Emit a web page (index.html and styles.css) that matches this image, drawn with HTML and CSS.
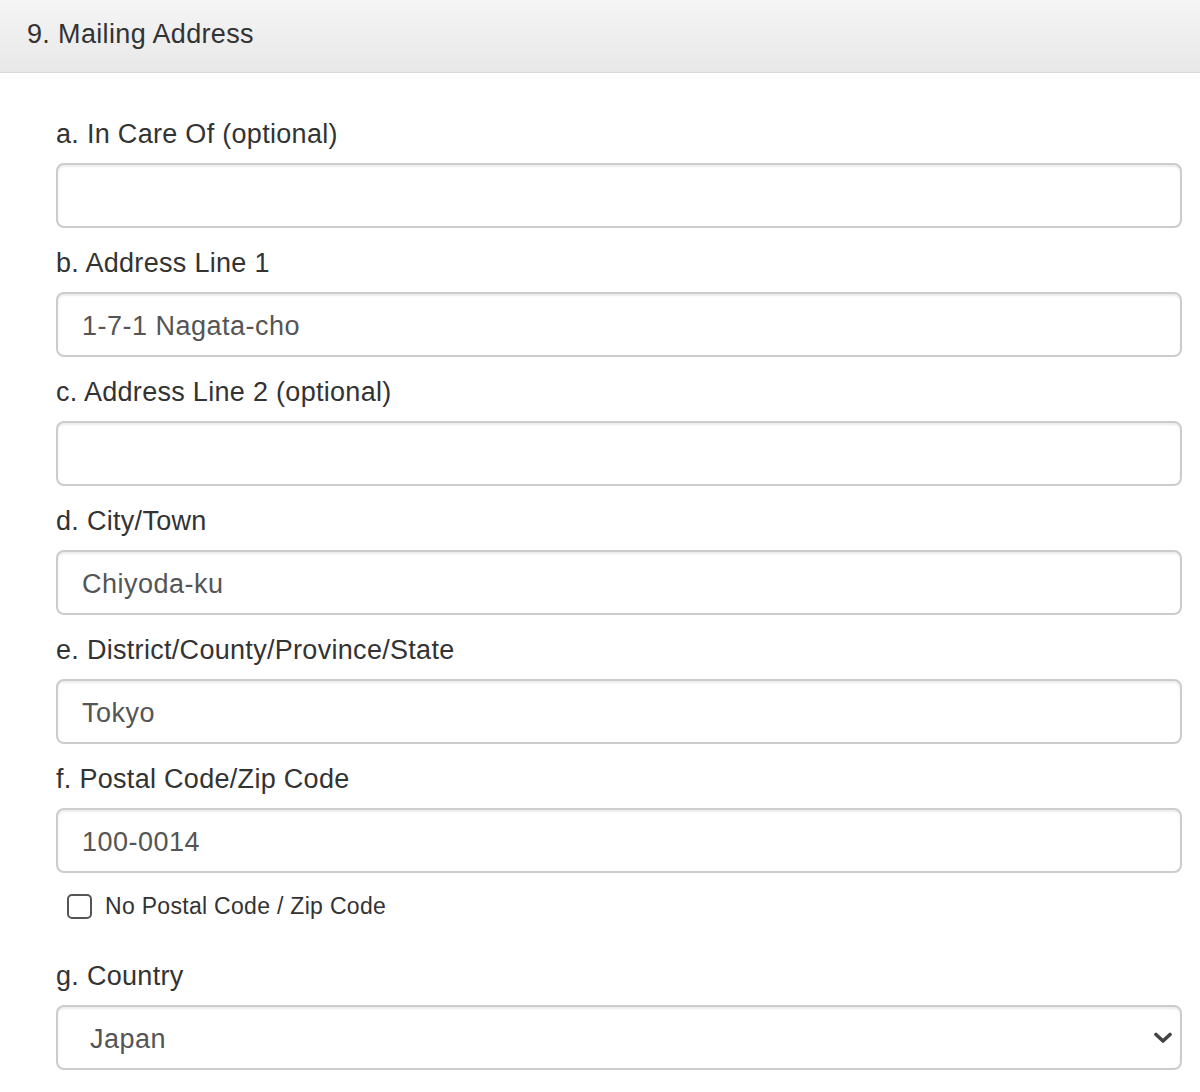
FILE: index.html
```html
<!DOCTYPE html>
<html>
<head>
<meta charset="utf-8">
<link rel="stylesheet" href="styles.css">
</head>
<body>
<div class="panel">
  <div class="panel-heading">9. Mailing Address</div>
  <div class="panel-body">
    <div class="field">
      <label class="field-label">a. In Care Of (optional)</label>
      <input class="form-control" type="text" value="">
    </div>
    <div class="field">
      <label class="field-label">b. Address Line 1</label>
      <input class="form-control" type="text" value="1-7-1 Nagata-cho">
    </div>
    <div class="field">
      <label class="field-label">c. Address Line 2 (optional)</label>
      <input class="form-control" type="text" value="">
    </div>
    <div class="field">
      <label class="field-label">d. City/Town</label>
      <input class="form-control" type="text" value="Chiyoda-ku">
    </div>
    <div class="field">
      <label class="field-label">e. District/County/Province/State</label>
      <input class="form-control" type="text" value="Tokyo">
    </div>
    <div class="field">
      <label class="field-label">f. Postal Code/Zip Code</label>
      <input class="form-control" type="text" value="100-0014">
    </div>
    <div class="check-row">
      <span class="checkbox"></span>
      <span class="check-label">No Postal Code / Zip Code</span>
    </div>
    <div class="field field-country">
      <label class="field-label">g. Country</label>
      <div class="select">
        <span class="select-value">Japan</span>
        <svg class="chevron" width="18" height="12" viewBox="0 0 18 12"><path d="M2 2.5 L9 9 L16 2.5" fill="none" stroke="#444" stroke-width="3.6" stroke-linecap="round" stroke-linejoin="round"/></svg>
      </div>
    </div>
  </div>
</div>
</body>
</html>
```

FILE: styles.css
```css
html, body {
  margin: 0;
  padding: 0;
  background: #fff;
}
body {
  font-family: "Liberation Sans", Arial, Helvetica, sans-serif;
  color: #333;
}
.panel-heading {
  height: 72px;
  box-sizing: content-box;
  padding-left: 27px;
  font-size: 27px;
  letter-spacing: 0.35px;
  line-height: 68px;
  color: #333;
  background: linear-gradient(to bottom, #f5f5f5 0%, #e8e8e8 100%);
  border-bottom: 1px solid #d8d8d8;
}
.panel-body {
  padding: 26px 18px 0 56px;
}
.field {
  display: flex;
  flex-direction: column;
}
.field-label {
  display: block;
  margin-top: 16px;
  margin-bottom: 10px;
  height: 38px;
  line-height: 38px;
  font-size: 27px;
  letter-spacing: 0.3px;
  color: #333;
}
.form-control {
  display: block;
  box-sizing: border-box;
  width: 100%;
  height: 65px;
  margin: 0;
  padding: 3px 24px 0;
  font-family: "Liberation Sans", Arial, Helvetica, sans-serif;
  font-size: 27px;
  letter-spacing: 0.5px;
  color: #555;
  background: #fff;
  border: 2px solid #ccc;
  border-radius: 8px;
  box-shadow: inset 0 2px 2px rgba(0,0,0,0.075);
  outline: none;
}
.check-row {
  display: flex;
  align-items: center;
  height: 66px;
  padding-left: 11px;
}
.checkbox {
  box-sizing: border-box;
  width: 25px;
  height: 25px;
  border: 2px solid #555;
  border-radius: 5px;
  background: #fff;
}
.check-label {
  margin-left: 13px;
  font-size: 23px;
  letter-spacing: 0.3px;
  color: #333;
}
.field-country .field-label {
  margin-top: 18px;
}
.select {
  box-sizing: border-box;
  height: 65px;
  display: flex;
  align-items: center;
  justify-content: space-between;
  padding: 3px 8px 0 32px;
  border: 2px solid #ccc;
  border-radius: 8px;
  box-shadow: inset 0 2px 2px rgba(0,0,0,0.075);
  background: #fff;
}
.select-value {
  font-size: 27px;
  letter-spacing: 0.5px;
  color: #555;
}
.chevron {
  display: block;
  margin-top: -3px;
}
```
